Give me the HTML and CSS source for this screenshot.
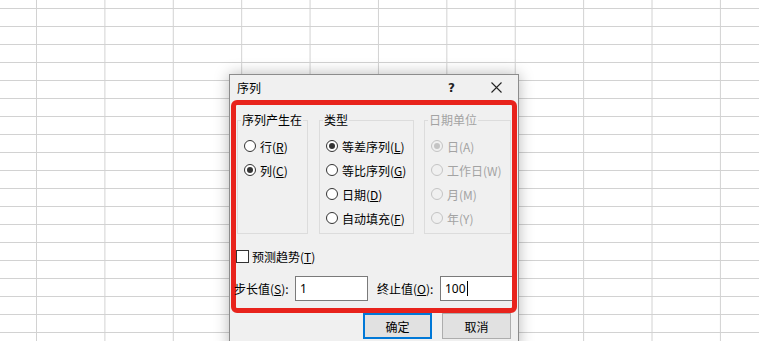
FILE: index.html
```html
<!DOCTYPE html>
<html lang="zh-CN">
<head>
<meta charset="UTF-8">
<title>序列</title>
<link rel="stylesheet" href="styles.css">
</head>
<body>
<div class="sheet"></div>

<div class="dialog">
  <div class="titlebar">
    <span class="title">序列</span>
    <span class="help">?</span>
    <span class="close">
      <svg width="11" height="11" viewBox="0 0 11 11"><path d="M0.5 0.5 L10.5 10.5 M10.5 0.5 L0.5 10.5" stroke="#222" stroke-width="1.1" fill="none"/></svg>
    </span>
  </div>

  <div class="mark">
    <div class="groups">
      <fieldset class="group g1">
        <legend>序列产生在</legend>
        <div class="opt"><span class="radio"></span>行(<u>R</u>)</div>
        <div class="opt"><span class="radio on"></span>列(<u>C</u>)</div>
      </fieldset>
      <fieldset class="group g2">
        <legend>类型</legend>
        <div class="opt"><span class="radio on"></span>等差序列(<u>L</u>)</div>
        <div class="opt"><span class="radio"></span>等比序列(<u>G</u>)</div>
        <div class="opt"><span class="radio"></span>日期(<u>D</u>)</div>
        <div class="opt"><span class="radio"></span>自动填充(<u>F</u>)</div>
      </fieldset>
      <fieldset class="group g3 off">
        <legend>日期单位</legend>
        <div class="opt"><span class="radio on"></span>日(A)</div>
        <div class="opt"><span class="radio"></span>工作日(W)</div>
        <div class="opt"><span class="radio"></span>月(M)</div>
        <div class="opt"><span class="radio"></span>年(Y)</div>
      </fieldset>
    </div>

    <div class="check"><span class="box"></span>预测趋势(<u>T</u>)</div>

    <div class="values">
      <span class="lbl l1">步长值(<u>S</u>):</span>
      <span class="field f1">1</span>
      <span class="lbl l2">终止值(<u>O</u>):</span>
      <span class="field f2">100<i class="caret"></i></span>
    </div>
  </div>

  <div class="buttons">
    <button class="btn ok">确定</button>
    <button class="btn">取消</button>
  </div>
</div>
</body>
</html>
```

FILE: styles.css
```css
* {
    box-sizing: border-box;
    margin: 0;
    padding: 0;
}

body {
    width: 759px;
    height: 341px;
    overflow: hidden;
    background: #fff;
    font-family: "Noto Sans CJK SC", "Microsoft YaHei", sans-serif;
    font-size: 12px;
    color: #000;
}

.sheet {
    width: 100%;
    height: 100%;
    background-color: #fff;
    background-image:
        linear-gradient(to right, #d2d2d2 1px, transparent 1px),
        linear-gradient(to bottom, #d2d2d2 1px, transparent 1px);
    background-size: 68.4px 18px;
    background-position: 36px 8px;
}

/* dialog floats over the sheet */
.dialog {
    position: absolute;
    left: 229px;
    top: 74px;
    width: 290px;
    background: #f0f0f0;
    border: 1px solid #8c8c8c;
    box-shadow: 0 0 14px rgba(0, 0, 0, 0.28);
}

.titlebar {
    height: 25px;
    display: flex;
    align-items: center;
    padding-left: 7px;
}
.title {
    flex: 1;
    line-height: 16px;
}
.help {
    width: 10px;
    font-family: "DejaVu Sans", sans-serif;
    font-size: 12px;
    font-weight: bold;
    color: #222;
    margin-right: 33px;
}
.close {
    display: flex;
    margin-right: 16px;
}

/* red highlight frame */
.mark {
    margin: 0 1px;
    border: 5px solid #e8231c;
    border-radius: 6px;
    padding: 7px 0 7px 0;
}

.groups {
    display: flex;
    padding-left: 1px;
}
.group {
    border: 1px solid #dcdcdc;
    padding: 6px 0 3px 6px;
    min-width: 0;
}
.g1 { width: 71px; margin-right: 11px; }
.g2 { width: 95px; margin-right: 10px; }
.g3 { width: 87px; }

.group legend {
    padding: 0 1px;
    margin-left: -3px;
    line-height: 16px;
    white-space: nowrap;
}
.off, .off legend {
    color: #a3a3a3;
}

.opt {
    height: 24px;
    display: flex;
    align-items: center;
    white-space: nowrap;
}
.opt u {
    text-decoration: underline;
}

.radio {
    width: 12px;
    height: 12px;
    border: 1px solid #333;
    border-radius: 50%;
    background: #fff;
    margin-right: 4px;
    display: flex;
    align-items: center;
    justify-content: center;
    flex: none;
}
.radio.on::after {
    content: "";
    width: 6px;
    height: 6px;
    border-radius: 50%;
    background: #333;
}
.off .radio {
    border-color: #c4c4c4;
    background: #f0f0f0;
}
.off .radio.on::after {
    background: #c4c4c4;
}

.check {
    margin-top: 14px;
    height: 16px;
    display: flex;
    align-items: center;
}
.box {
    width: 13px;
    height: 13px;
    border: 1px solid #333;
    background: #fff;
    margin-right: 3px;
}

.values {
    margin-top: 12px;
    display: flex;
    align-items: center;
    height: 25px;
}
.lbl {
    white-space: nowrap;
}
.l1 { width: 59px; margin-left: -2px; }
.l2 { width: 63px; margin-left: 9px; }
.field {
    height: 25px;
    background: #fff;
    border: 1px solid #7a7a7a;
    display: flex;
    align-items: center;
    padding-left: 4px;
    font-family: "Noto Sans", sans-serif;
    font-size: 12px;
}
.f1 { width: 73px; margin-left: 2px; }
.f2 { width: 72px; border-right: 0; }
.caret {
    width: 1px;
    height: 15px;
    background: #000;
    margin-left: 1px;
}

.buttons {
    display: flex;
    justify-content: flex-end;
    gap: 10px;
    padding: 0 7px 12px 0;
}
.btn {
    width: 69px;
    height: 26px;
    background: #e1e1e1;
    border: 1px solid #adadad;
    font-family: "Noto Sans CJK SC", sans-serif;
    font-size: 12px;
    color: #000;
}
.btn.ok {
    border: 2px solid #0078d7;
}
```
